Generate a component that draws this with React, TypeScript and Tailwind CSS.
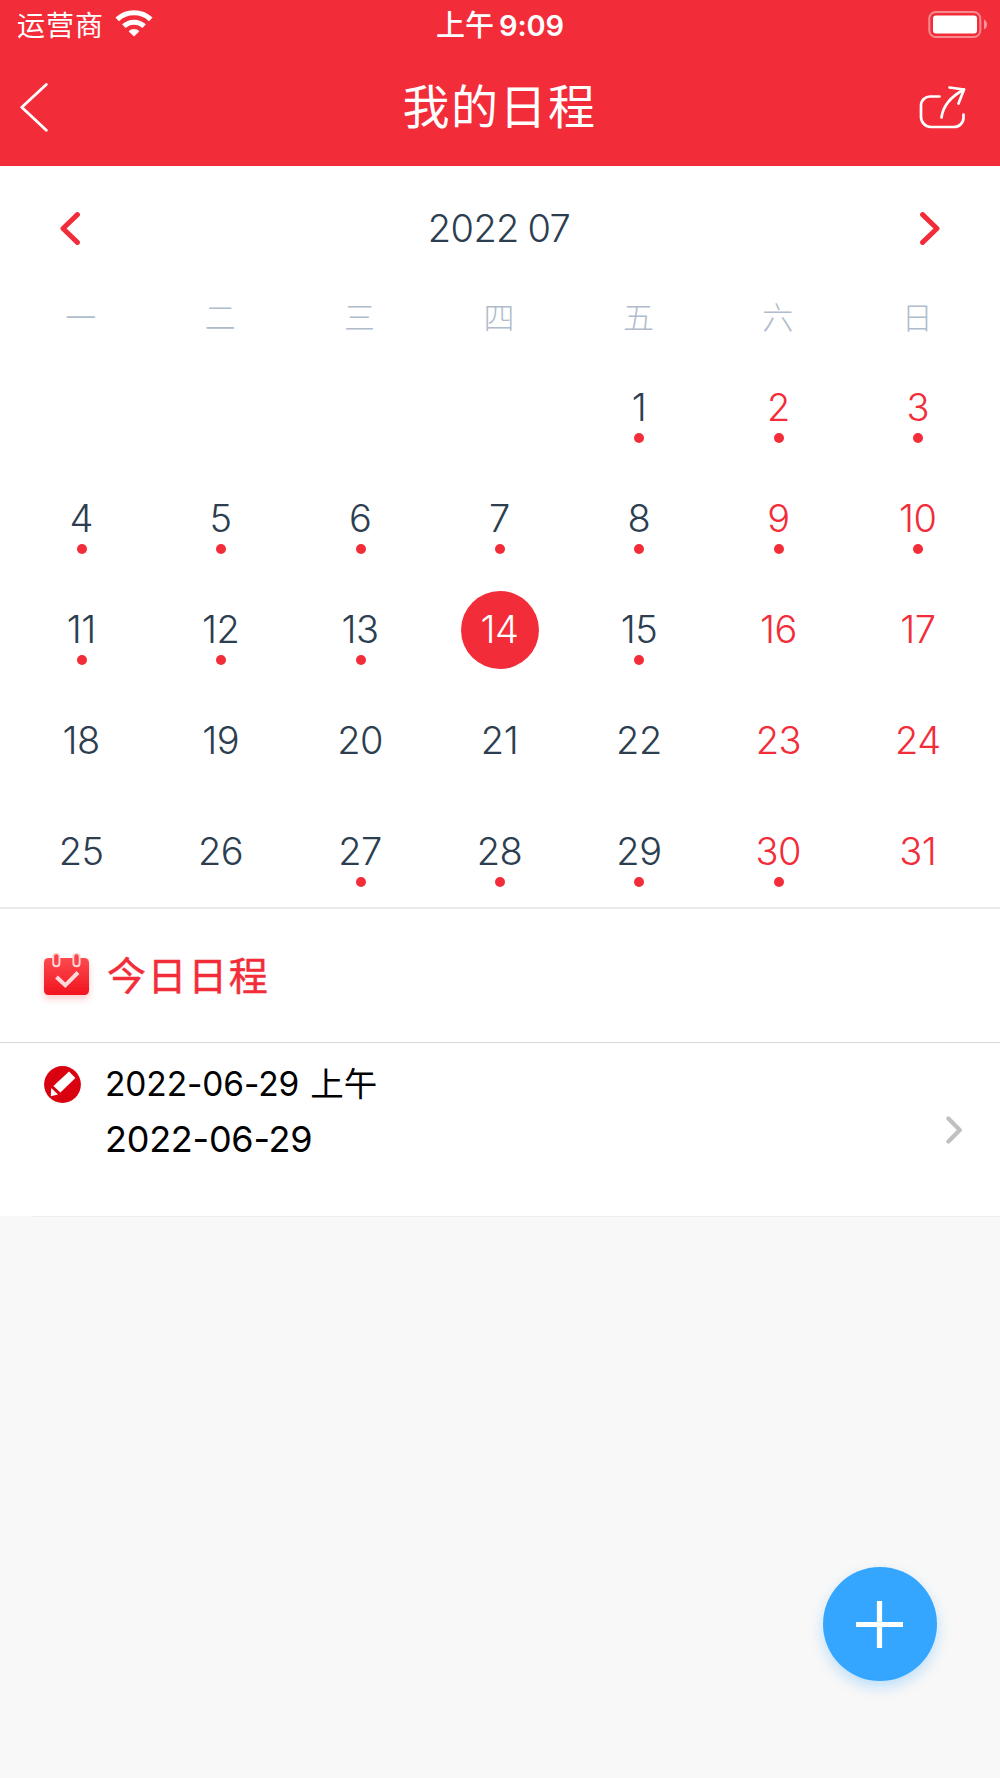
import clsx from "clsx";

const weekdays = ["一", "二", "三", "四", "五", "六", "日"];

const leadingBlanks = 4;
const daysInMonth = 31;
const today = 14;
const markedDays = [1, 2, 3, 4, 5, 6, 7, 8, 9, 10, 11, 12, 13, 15, 27, 28, 29, 30];

const StatusBar = () => {
  return (
    <div className="grid h-[50px] grid-cols-3 items-center text-white">
      <div className="flex items-center pl-[17px]">
        <span className="mt-[2px] text-[28px] leading-none tracking-[1px]">运营商</span>
        <svg className="ml-[11px] -mt-[4px] h-[28px] w-[38px]" viewBox="0 0 38 28" fill="none" stroke="#fff">
          <path d="M2.2 10.4 A24.5 24.5 0 0 1 35.8 10.4" strokeWidth="5.2" />
          <path d="M8.8 17.2 A15 15 0 0 1 29.2 17.2" strokeWidth="5" />
          <path d="M13.6 22.2 A8 8 0 0 1 24.4 22.2 L19 27.4 Z" fill="#fff" stroke="none" />
        </svg>
      </div>
      <div className="flex items-center justify-center gap-[5px] pt-px text-[29px] font-medium leading-none">
        <span>上午</span>
        <span className="font-semibold tracking-[-0.1px]">9:09</span>
      </div>
      <div className="flex items-center justify-end pr-[13px]">
        <svg className="-mt-px h-[28px] w-[60px]" viewBox="0 0 60 28">
          <rect x="2.3" y="1" width="51" height="25" rx="6.5" fill="none" stroke="#fff" strokeOpacity="0.45" strokeWidth="2" />
          <rect x="6" y="4.5" width="44" height="18" rx="3" fill="#fff" />
          <path d="M57 8.5 C61 10.5 61 16.5 57 18.5 Z" fill="#fff" fillOpacity="0.5" />
        </svg>
      </div>
    </div>
  );
};

const Header = () => {
  return (
    <header className="h-[166px] bg-[#f22d39]">
      <StatusBar />
      <div className="flex h-[114px] items-center justify-between pl-5 pr-[34px] text-white">
        <svg className="h-[50px] w-[46px]" viewBox="0 0 46 50" fill="none" stroke="#fff" strokeWidth="2.8" strokeLinecap="round" strokeLinejoin="round">
          <path d="M26.3 2.4 L1.8 25.3 L26.3 48.2" />
        </svg>
        <h1 className="ml-[14px] pb-px text-[47px] leading-none tracking-[1.5px]">我的日程</h1>
        <svg className="h-[44px] w-[47px]" viewBox="0 0 47 44" fill="none" stroke="#fff" strokeWidth="2.7" strokeLinecap="round" strokeLinejoin="round">
          <path d="M20.5 11.5 H11.5 A9 9 0 0 0 2 20.5 V32 A10 10 0 0 0 12 42 H35 A9.5 9.5 0 0 0 44.5 32.5 V29.5" />
          <path d="M22.5 32.5 C24 21.5 31 12 45 4.5" />
          <path d="M30.5 2.5 L45 4.5 L39.5 18.5" />
        </svg>
      </div>
    </header>
  );
};

const DayCell = ({ day, weekend }: { day: number; weekend: boolean }) => {
  return (
    <div className="relative flex h-[111.1px] items-center justify-center">
      <span
        className={clsx(
          "flex size-[78px] items-center justify-center rounded-full pb-[2px] pr-px",
          day === today ? "bg-[#f22d39] text-white" : weekend ? "text-[#f22d39]" : "text-[#2c3e50]"
        )}
      >
        {day}
      </span>
      {markedDays.includes(day) && (
        <i className="absolute bottom-[20.5px] left-1/2 size-2.5 -translate-x-1/2 rounded-full bg-[#f22d39]" />
      )}
    </div>
  );
};

const Calendar = () => {
  const days = Array.from({ length: daysInMonth }, (_, i) => i + 1);

  return (
    <section className="border-b-2 border-[#e9e9e9] bg-white">
      <div className="flex h-[125px] items-center justify-between px-[60px]">
        <svg className="h-[34px] w-[20px]" viewBox="0 0 20 34" fill="none" stroke="#f22d39" strokeWidth="5" strokeLinecap="round" strokeLinejoin="round">
          <path d="M17.4 2.6 L3 16.5 L17.4 30.4" />
        </svg>
        <span className="pb-[2px] pr-[2px] text-[38px] font-light leading-none tracking-[-0.6px] text-[#2c3e50] [word-spacing:-1.5px]">
          2022 07
        </span>
        <svg className="h-[34px] w-[20px]" viewBox="0 0 20 34" fill="none" stroke="#f22d39" strokeWidth="5" strokeLinecap="round" strokeLinejoin="round">
          <path d="M2.6 2.6 L17 16.5 L2.6 30.4" />
        </svg>
      </div>
      <div className="grid h-[61px] grid-cols-7 pl-[11px] pr-[13px] pt-[11px] text-center text-[31px] font-light leading-[32px] text-[#b0bccb]">
        {weekdays.map((name) => (
          <span key={name}>{name}</span>
        ))}
      </div>
      <div className="grid grid-cols-7 px-3 text-[38px] font-light leading-none tracking-[-0.5px]">
        {Array.from({ length: leadingBlanks }, (_, i) => (
          <div key={`blank-${i}`} />
        ))}
        {days.map((day) => (
          <DayCell key={day} day={day} weekend={(day + leadingBlanks - 1) % 7 > 4} />
        ))}
      </div>
    </section>
  );
};

const CalendarIcon = () => {
  return (
    <svg className="mt-[7px] h-[60px] w-[61px]" viewBox="0 0 61 60">
      <defs>
        <linearGradient id="cal" x1="0" y1="0" x2="0" y2="1">
          <stop offset="0" stopColor="#fd4a4f" />
          <stop offset="1" stopColor="#f0141e" />
        </linearGradient>
        <filter id="calShadow" x="-30%" y="-30%" width="160%" height="170%">
          <feDropShadow dx="0" dy="4" stdDeviation="3" floodColor="#f22f3b" floodOpacity="0.25" />
        </filter>
      </defs>
      <rect x="8" y="9" width="45" height="37" rx="4.5" fill="url(#cal)" filter="url(#calShadow)" />
      <g strokeLinecap="round" fill="none">
        <path d="M20.3 7.8 V14.2 M40.5 7.8 V14.2" stroke="#ffd5d6" strokeWidth="8.2" />
        <path d="M20.3 7.5 V14 M40.5 7.5 V14" stroke="#f8454b" strokeWidth="4.4" />
      </g>
      <path d="M20.5 28 L29.3 36.3 L42 23.5" fill="none" stroke="#ffd9da" strokeWidth="4" />
    </svg>
  );
};

const TodaySchedule = () => {
  return (
    <section className="bg-white">
      <div className="flex h-[134px] items-center border-b border-[#d9d9d9] pl-9">
        <CalendarIcon />
        <h2 className="ml-2.5 pb-px text-[39px] leading-none tracking-[1.6px] text-[#f22d39] [-webkit-text-stroke:0.5px_#f22d39]">今日日程</h2>
      </div>
      <div className="flex h-[173px] items-start pl-11 pr-[37px] text-black">
        <svg className="mt-[23px] size-[37px]" viewBox="0 0 37 37">
          <circle cx="18.5" cy="18.5" r="18.4" fill="#d9000f" />
          <path d="M25 5.6 L31.4 12 L16.4 26.5 L9.4 19.9 Z" fill="#fff" />
          <path d="M7.2 22 L14 28.6 L6.8 30.2 Z" fill="#fff" />
        </svg>
        <div className="ml-6 flex-1">
          <p className="mt-[17px] flex h-[48px] items-center gap-[11px] text-[33.5px] leading-none">
            <span className="tracking-[-0.1px]">2022-06-29</span>
            <span>上午</span>
          </p>
          <p className="mt-[7px] flex h-[48px] items-center text-[36px] leading-none tracking-[-0.25px]">2022-06-29</p>
        </div>
        <svg className="mt-[72.5px] h-[28px] w-[17px]" viewBox="0 0 17 28" fill="none" stroke="#c0c0c0" strokeWidth="4.2" strokeLinecap="round" strokeLinejoin="round">
          <path d="M2.4 2.6 L13.8 14 L2.4 25.4" />
        </svg>
      </div>
    </section>
  );
};

export default function App() {
  return (
    <div className="relative h-[1778px] w-[1000px] overflow-hidden bg-[#f8f8f8] font-['Inter','Noto_Sans_CJK_SC',sans-serif]">
      <Header />
      <Calendar />
      <TodaySchedule />
      <div className="ml-8 h-px bg-[#efefef]" />
      <button className="absolute bottom-[97px] right-[63px] flex size-[114px] items-center justify-center rounded-full bg-[#35a6ff] shadow-[0_6px_14px_rgba(53,166,255,0.3)]">
        <svg className="mr-px size-[47px]" viewBox="0 0 47 47" stroke="#fff" strokeWidth="5.2">
          <path d="M0 23.5 H47 M23.5 0 V47" />
        </svg>
      </button>
    </div>
  );
}
